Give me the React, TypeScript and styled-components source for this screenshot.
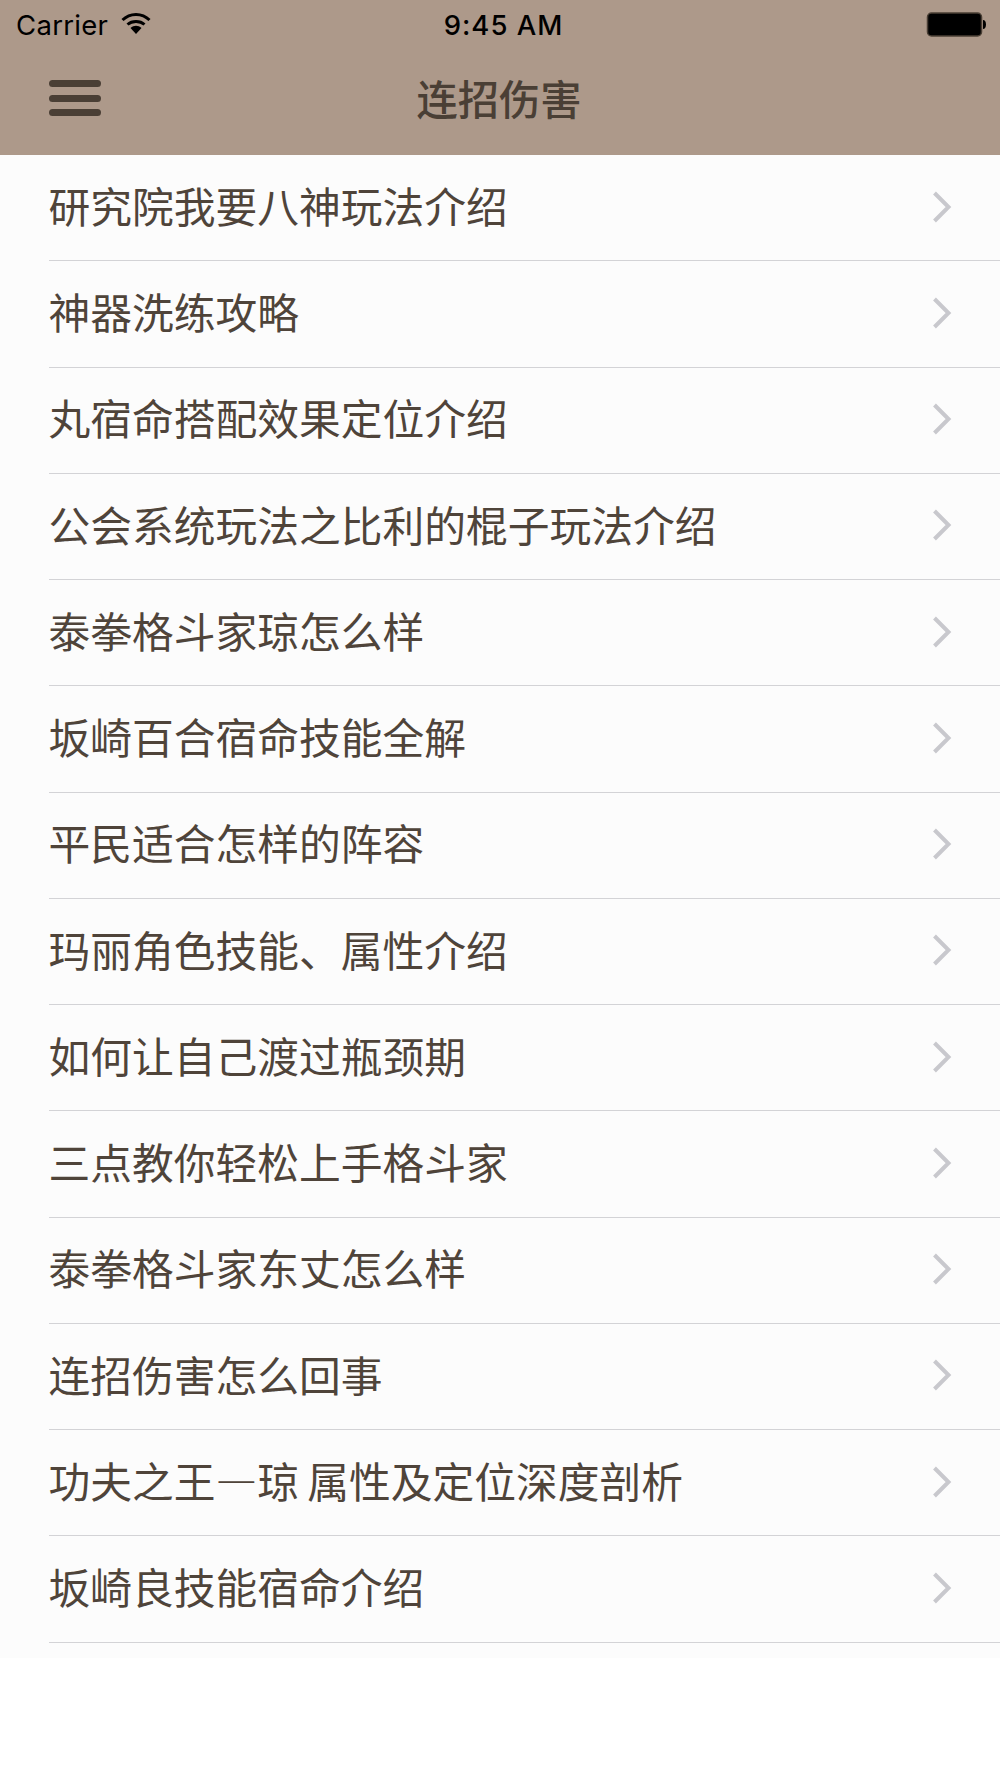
import styled, { createGlobalStyle } from 'styled-components';

const GlobalStyle = createGlobalStyle`
	html, body {
		margin: 0;
		padding: 0;
		background: #ffffff;
	}
`;

const Screen = styled.div`
	width: 1000px;
	height: 1778px;
	background: #ffffff;
	overflow: hidden;
	font-family: 'Noto Sans CJK SC', 'Liberation Sans', sans-serif;
`;

const Header = styled.header`
	height: 155px;
	background: #ad998a;
	box-sizing: border-box;
	display: flex;
	flex-direction: column;
`;

const StatusBar = styled.div`
	height: 50px;
	display: grid;
	grid-template-columns: 1fr auto 1fr;
	align-items: center;
	padding: 0 13px 0 16px;
	color: #000000;
	font-family: Inter, 'Liberation Sans', sans-serif;
	font-size: 27.5px;
`;

const Carrier = styled.div`
	display: flex;
	align-items: center;
	gap: 13px;
	letter-spacing: 0.3px;
`;

const WifiIcon = styled.svg`
	margin-top: -3px;
`;

const Clock = styled.div`
	font-weight: 500;
	letter-spacing: 1px;
	margin-left: 4px;
`;

const Battery = styled.div`
	justify-self: end;
	display: flex;
	align-items: center;
`;

const NavBar = styled.div`
	flex: 1;
	position: relative;
	display: flex;
	align-items: center;
	justify-content: center;
	padding-bottom: 9px;
`;

const MenuButton = styled.div`
	position: absolute;
	left: 49px;
	top: 30px;
	width: 52px;
	display: flex;
	flex-direction: column;
	gap: 7.5px;
	filter: blur(0.5px);
`;

const MenuBar = styled.span`
	display: block;
	height: 7px;
	border-radius: 3.5px;
	background: #4a3f35;
`;

const Title = styled.h1`
	margin: 0 2px 0 0;
	font-size: 41.3px;
	font-weight: 500;
	color: #4a3f35;
	line-height: 1;
`;

const List = styled.ul`
	list-style: none;
	margin: 0;
	padding: 0 0 15px;
	background: #fcfcfc;
`;

const Row = styled.li`
	height: 106.25px;
	box-sizing: border-box;
	margin-left: 49px;
	padding-right: 48px;
	display: flex;
	align-items: center;
	justify-content: space-between;
	border-bottom: 1.5px solid #d3d3d6;
`;

const RowText = styled.span`
	font-size: 41.75px;
	font-weight: 400;
	color: #4f443a;
	line-height: 1;
	white-space: pre;
	word-spacing: -1px;
	margin: 0 0 4px -0.5px;
`;

const Chevron = styled.svg`
	width: 20px;
	height: 32px;
	flex: none;
	margin-bottom: 2px;
`;

const items = [
	'研究院我要八神玩法介绍',
	'神器洗练攻略',
	'丸宿命搭配效果定位介绍',
	'公会系统玩法之比利的棍子玩法介绍',
	'泰拳格斗家琼怎么样',
	'坂崎百合宿命技能全解',
	'平民适合怎样的阵容',
	'玛丽角色技能、属性介绍',
	'如何让自己渡过瓶颈期',
	'三点教你轻松上手格斗家',
	'泰拳格斗家东丈怎么样',
	'连招伤害怎么回事',
	'功夫之王—琼 属性及定位深度剖析',
	'坂崎良技能宿命介绍',
];

export default function App() {
	return (
		<Screen lang="zh-CN">
			<GlobalStyle />
			<Header>
				<StatusBar>
					<Carrier>
						Carrier
						<WifiIcon width="30" height="23" viewBox="0 0 30 23">
							<path d="M1.500 8 C9 0.500 21 0.500 28.500 8" fill="none" stroke="#000" strokeWidth="3" />
							<path d="M6.500 12.500 C11 8.500 19 8.500 23.500 12.500" fill="none" stroke="#000" strokeWidth="3" />
							<path d="M9.500 16 L15 22 L20.500 16 C17 13 13 13 9.500 16 Z" fill="#000" />
						</WifiIcon>
					</Carrier>
					<Clock>9:45 AM</Clock>
					<Battery>
						<svg width="62" height="26" viewBox="0 0 62 26">
							<rect x="2.500" y="1" width="54" height="23" rx="4" fill="#000" stroke="#4a3f35" strokeWidth="1.500" />
							<path d="M58 8 C60 8 61 10 61 12.500 C61 15 60 17 58 17 Z" fill="#000" />
						</svg>
					</Battery>
				</StatusBar>
				<NavBar>
					<MenuButton>
						<MenuBar />
						<MenuBar />
						<MenuBar />
					</MenuButton>
					<Title>连招伤害</Title>
				</NavBar>
			</Header>
			<List>
				{items.map((item) => (
					<Row key={item}>
						<RowText>{item}</RowText>
						<Chevron viewBox="0 0 20 32">
							<path d="M2.500 2 L16.500 16 L2.500 30" fill="none" stroke="#c8c8cd" strokeWidth="4" />
						</Chevron>
					</Row>
				))}
			</List>
		</Screen>
	);
}
